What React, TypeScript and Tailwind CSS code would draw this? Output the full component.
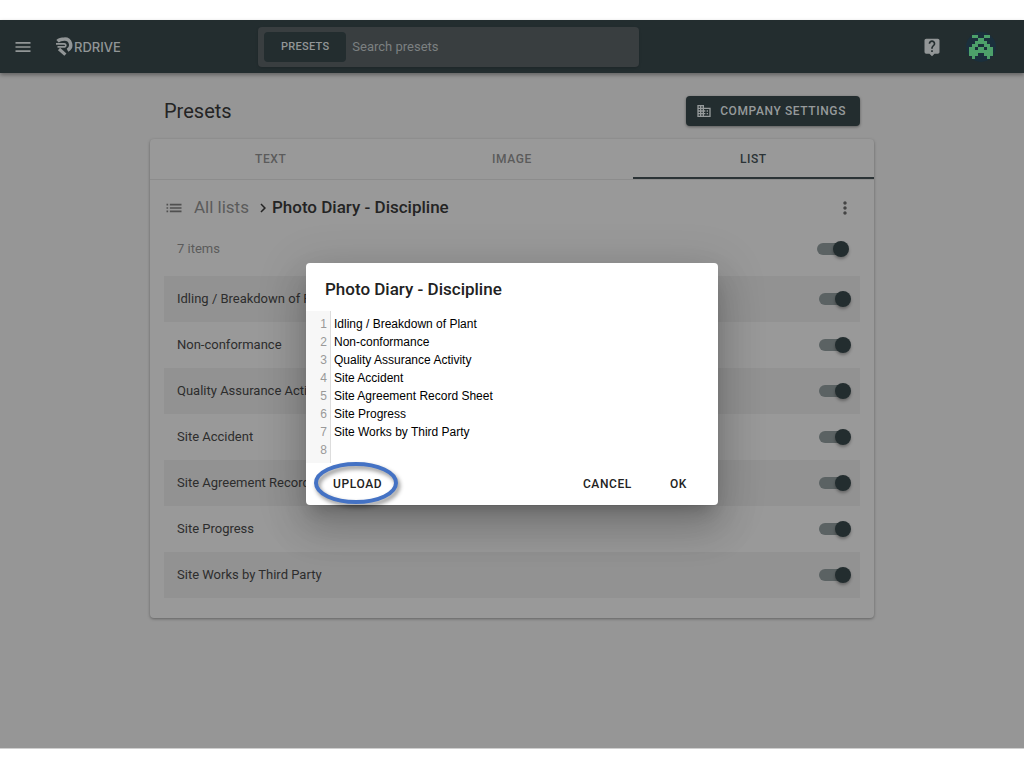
import React, { useState } from "react";
import { MdMenu, MdLiveHelp, MdDomain, MdList, MdChevronRight, MdMoreVert } from "react-icons/md";

const ITEMS = [
  "Idling / Breakdown of Plant",
  "Non-conformance",
  "Quality Assurance Activity",
  "Site Accident",
  "Site Agreement Record Sheet",
  "Site Progress",
  "Site Works by Third Party",
];

const AVATAR = [
  ".XX..XX.",
  "...XX...",
  "..XXXX..",
  ".XX..XX.",
  "XX.XX.XX",
  "XXXXXXXX",
  "XXX..XXX",
  ".X....X.",
];

function Toggle({ label }: { label: string }) {
  const [on, setOn] = useState(true);
  return (
    <label className="relative flex h-4 w-8 items-center">
      <input
        type="checkbox"
        checked={on}
        onChange={() => setOn(!on)}
        aria-label={label}
        className="peer absolute inset-0 cursor-pointer appearance-none"
      />
      <span className="pointer-events-none h-3 w-7 rounded-full bg-[#5b6263]" />
      <span className="pointer-events-none absolute left-0 size-4 rounded-full bg-[#777] shadow-[0_2px_3px_rgba(0,0,0,0.3)] peer-checked:left-4 peer-checked:bg-[#232d2f]" />
    </label>
  );
}

function Logo() {
  return (
    <a href="#home" className="flex items-center gap-px text-[#929697]">
      <svg aria-hidden="true" viewBox="0 0 17 19" className="h-[19px] w-[17px]" fill="none" stroke="currentColor">
        <path d="M1.500 4.200C3.500 2.300 5.500 2 8.500 2a6 6 0 0 1 3 11.300" strokeWidth="3.400" />
        <path d="M0 6.800h8.200a1.600 1.600 0 0 1 .8 3H1.500" strokeWidth="1.700" />
        <path d="M3 12l6.400 5.600" strokeWidth="3.200" />
      </svg>
      <span className="font-['Inter',sans-serif] text-[13px] leading-5 font-medium">RDRIVE</span>
    </a>
  );
}

export default function App() {
  const [text, setText] = useState(ITEMS.join("\n") + "\n");
  return (
    <div className="min-h-screen bg-white py-5 font-['Roboto',sans-serif]">
      <div className="relative min-h-[729px] border-b border-[#cfcfcf] bg-[#969696]">
        <header className="flex h-[53px] items-center bg-[#232d2f] pr-7 pl-[13px] shadow-[0_2px_4px_rgba(0,0,0,0.35)]">
          <div className="flex w-[245px] items-center gap-[23px]">
            <button aria-label="Menu" className="text-[#929697]">
              <MdMenu size={20} />
            </button>
            <Logo />
          </div>
          <div className="flex h-10 w-[381px] items-center gap-1.5 rounded bg-[#393e40] px-1.5 shadow-sm">
            <button className="h-[30px] rounded bg-[#232d2f] px-[17px] pt-0.5 text-[11px] font-medium tracking-wide text-[#929697]">PRESETS</button>
            <input
              aria-label="Search presets"
              placeholder="Search presets"
              className="min-w-0 flex-1 bg-transparent text-[13px] text-[#929697] outline-none placeholder:text-[#7c8081]"
            />
          </div>
          <div className="flex flex-1 items-center justify-end gap-6">
            <button aria-label="Help" className="text-[#929697]">
              <MdLiveHelp size={20} />
            </button>
            <button aria-label="Account" className="size-[30px] overflow-hidden rounded-full bg-[#1b2f3c] p-[3px]">
              <svg viewBox="0 0 8 8" className="size-6" shapeRendering="crispEdges" fill="#4da06a">
                {AVATAR.flatMap((row, y) =>
                  [...row].map((c, x) => (c === "X" ? <rect key={x + "-" + y} x={x} y={y} width="1" height="1" /> : null)),
                )}
              </svg>
            </button>
          </div>
        </header>

        <main className="mx-auto max-w-[724px] pt-[23px]">
          <div className="flex items-center justify-between px-3.5">
            <h1 className="text-xl text-[#242424]">Presets</h1>
            <button className="flex h-[30px] items-center gap-2 rounded bg-[#232d2f] pr-3.5 pl-2.5 text-xs font-medium tracking-wider text-[#969a9b] shadow-[0_1px_3px_rgba(0,0,0,0.4)]">
              <MdDomain size={16} />
              COMPANY SETTINGS
            </button>
          </div>

          <section className="mt-[13px] rounded bg-[#999] pb-5 shadow-[0_1px_3px_rgba(0,0,0,0.35)]">
            <div role="tablist" className="grid h-[41px] grid-cols-3 border-b border-[#8c8c8c] text-xs font-medium tracking-wider">
              <button role="tab" aria-selected="false" className="text-[#5b5b5b]">TEXT</button>
              <button role="tab" aria-selected="false" className="text-[#5b5b5b]">IMAGE</button>
              <button role="tab" aria-selected="true" className="border-b-2 border-[#2b3336] pt-0.5 text-[#2b3336]">LIST</button>
            </div>

            <div className="flex h-14 items-center px-3.5">
              <MdList size={20} className="mr-2.5 text-[#505050]" />
              <a href="#lists" className="text-[17px] text-[#5b5b5b]">All lists</a>
              <MdChevronRight size={18} className="ml-[5px] text-[#242424]" />
              <h2 className="text-[17px] font-medium text-[#242424]">Photo Diary - Discipline</h2>
              <button aria-label="More" className="mr-[5px] ml-auto text-[#444]">
                <MdMoreVert size={20} />
              </button>
            </div>

            <div className="mx-3.5 flex h-10 items-center justify-between pr-[11px] pb-3.5 pl-[13px]">
              <span className="text-[13px] text-[#5b5b5b]">7 items</span>
              <Toggle label="All items" />
            </div>

            <ul className="mx-3.5">
              {ITEMS.map((item) => (
                <li key={item} className="flex h-[46px] items-center justify-between pr-[9px] pl-[13px] text-[13px] text-[#2d2d2d] odd:bg-[#929292]">
                  {item}
                  <Toggle label={item} />
                </li>
              ))}
            </ul>
          </section>
        </main>

        <div className="absolute inset-0 flex items-center justify-center">
          <div
            role="dialog"
            aria-labelledby="dialog-title"
            className="w-[412px] rounded bg-white shadow-[0_11px_15px_-7px_rgba(0,0,0,0.2),0_24px_38px_3px_rgba(0,0,0,0.14),0_9px_46px_8px_rgba(0,0,0,0.12)]"
          >
            <h2 id="dialog-title" className="px-[19px] pt-3.5 pb-2.5 text-[17px] leading-6 font-medium text-[#222]">
              Photo Diary - Discipline
            </h2>
            <div className="flex text-[12px] leading-[18px] font-['Liberation_Sans',sans-serif]">
              <div aria-hidden="true" className="w-[25px] border-r border-[#ddd] bg-[#f7f7f7] py-1 pr-[3px] text-right text-[#999]">
                {text.split("\n").map((_, i) => (
                  <div key={i}>{i + 1}</div>
                ))}
              </div>
              <textarea
                aria-label="List items"
                rows={8}
                value={text}
                onChange={(e) => setText(e.target.value)}
                className="flex-1 resize-none overflow-hidden px-[3px] py-1 text-black outline-none"
              />
            </div>
            <div className="flex h-[42px] items-center px-[19px] text-xs font-medium tracking-wider text-[#222]">
              <button className="relative px-2 py-1">
                UPLOAD
                <svg aria-hidden="true" viewBox="0 0 92 50" className="absolute -top-3 -left-3 h-[50px] w-[92px] drop-shadow-[2px_3px_2px_rgba(0,0,0,0.45)]" fill="none" stroke="#4472c4" strokeWidth="4">
                  <ellipse cx="43" cy="23" rx="40" ry="19" />
                </svg>
              </button>
              <button className="ml-auto px-2 py-1">CANCEL</button>
              <button className="mr-1 ml-[22px] px-2 py-1">OK</button>
            </div>
          </div>
        </div>
      </div>
    </div>
  );
}
